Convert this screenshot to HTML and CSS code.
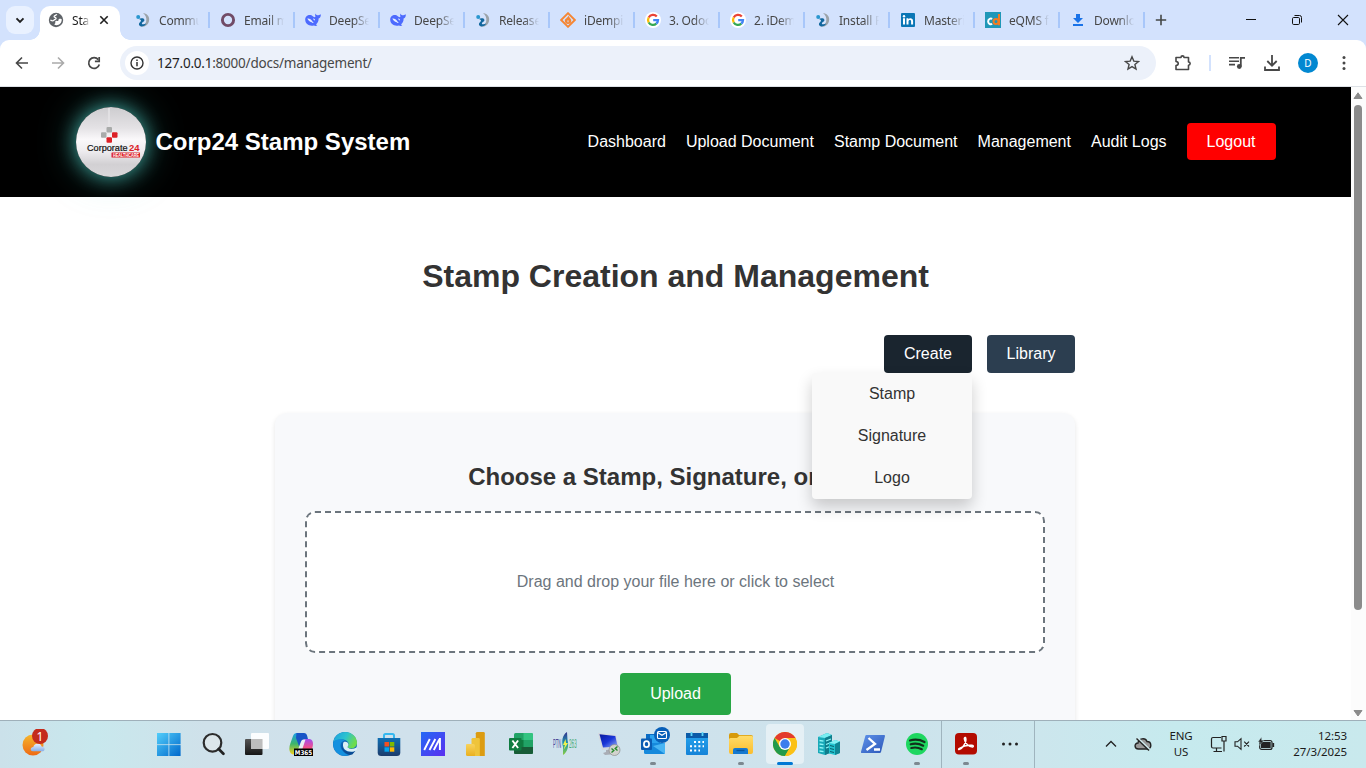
FILE: index.html
```html
<!DOCTYPE html>
<html lang="en">
<head>
<meta charset="utf-8">
<title>Stamp Creation and Management</title>
<link rel="stylesheet" href="styles.css">
</head>
<body>
<svg class="defs" width="0" height="0">
  <defs>
    <linearGradient id="gBlue" gradientUnits="userSpaceOnUse" x1="0" y1="0" x2="22" y2="24"><stop offset="0" stop-color="#54d0fb"/><stop offset="1" stop-color="#026bcd"/></linearGradient>
    <linearGradient id="gSun" x1="0" y1="0" x2="0" y2="1"><stop offset="0" stop-color="#f6b62c"/><stop offset="1" stop-color="#ee6a14"/></linearGradient>
    <linearGradient id="gCloud" x1="0" y1="0" x2="0" y2="1"><stop offset="0" stop-color="#eaf2ff"/><stop offset="1" stop-color="#86aee8"/></linearGradient>
    <linearGradient id="gDark" x1="0" y1="0" x2="0" y2="1"><stop offset="0" stop-color="#555"/><stop offset="1" stop-color="#161616"/></linearGradient>
    <linearGradient id="gCopL" x1="0" y1="0" x2="0" y2="1"><stop offset="0" stop-color="#1b9fe8"/><stop offset=".5" stop-color="#3db56b"/><stop offset="1" stop-color="#f4d11c"/></linearGradient>
    <linearGradient id="gCopR" x1="0" y1="0" x2="0" y2="1"><stop offset="0" stop-color="#a24df0"/><stop offset=".6" stop-color="#f0508c"/><stop offset="1" stop-color="#fb9a4a"/></linearGradient>
    <linearGradient id="gEdge" x1="0" y1="0" x2="1" y2=".4"><stop offset="0" stop-color="#1c9de0"/><stop offset=".55" stop-color="#2cc3cf"/><stop offset="1" stop-color="#6edc4c"/></linearGradient>
    <linearGradient id="gStore" x1="0" y1="0" x2="0" y2="1"><stop offset="0" stop-color="#0f6fb4"/><stop offset="1" stop-color="#1c3c6c"/></linearGradient>
    <linearGradient id="gAsus" x1="0" y1="0" x2="1" y2="1"><stop offset="0" stop-color="#2369f5"/><stop offset="1" stop-color="#5b2ff0"/></linearGradient>
    <linearGradient id="gBi" x1="0" y1="0" x2="0" y2="1"><stop offset="0" stop-color="#f8d35c"/><stop offset="1" stop-color="#eab01f"/></linearGradient>
    <linearGradient id="gPtn" x1="0" y1="0" x2="0" y2="1"><stop offset="0" stop-color="#33308c"/><stop offset=".5" stop-color="#1f9bb0"/><stop offset="1" stop-color="#8acb3a"/></linearGradient>
    <linearGradient id="gScreen" x1="0" y1="0" x2="1" y2="1"><stop offset="0" stop-color="#0a1a9c"/><stop offset=".5" stop-color="#1a35d8"/><stop offset="1" stop-color="#9db8f5"/></linearGradient>
    <linearGradient id="gCal" x1="0" y1="0" x2="0" y2="1"><stop offset="0" stop-color="#27a5ee"/><stop offset="1" stop-color="#1583d8"/></linearGradient>
    <linearGradient id="gFolder" x1="0" y1="0" x2="0" y2="1"><stop offset="0" stop-color="#ffdc6a"/><stop offset="1" stop-color="#fbbd2d"/></linearGradient>
    <linearGradient id="gPs" x1="0" y1="0" x2="1" y2="1"><stop offset="0" stop-color="#5f93ea"/><stop offset="1" stop-color="#2b56b8"/></linearGradient>
  </defs>
  <symbol id="swirl" viewBox="0 0 16 16">
    <path d="M8 1c5.800.6 7.600 6.200 5.200 10.200-1.700 2.900-5.200 4.100-7.700 3 2.600-.6 5-1.700 5.700-4.700C11.900 6.300 10.700 3 8 1z" fill="#9ba2a8"/>
    <path d="M3.800 6.900c2-.9 5.200-.9 5.600 1 .3 1.700-2.500 2.100-2.500 3.500 0 1.200 2.400 1.200 4.300.1-1.300 2.900-5.300 4.100-6.800 2-1.500-2.300 1.300-3.600 1.600-4.800.2-.9-.9-1.500-2.200-1.800z" fill="#13689f"/>
    <circle cx="3.200" cy="4.900" r="2" fill="#2a97cf"/>
  </symbol>
  <symbol id="whale" viewBox="0 0 16 16">
    <path d="M.2 7.800C.1 4.400 2.800 2.700 5.600 3.100c1.300.2 1.900 1 2.900 1.700.9.600 1.600.4 2-.3-.5-.9-.4-2 0-2.900.4 1 1 1.600 1.900 1.700 1 .1 2-.4 3.400-1.100.2 2.300-.6 3.700-2.200 4.200.1 2.800-1 4.600-2.600 6l1.300.9c-1 .8-2.300.7-3.400.2C4.500 14.600.3 12.200.2 7.800z" fill="#4d6bfe"/>
    <path d="M2.300 6.600c1.900-.5 3.900.9 5.200 3 .4.700.8 1 1.300 1.300-1 .3-1.800-.2-2.500-.9-1.100.1-2.800-.9-4-3.400z" fill="#e6eeff"/><path d="M8 6.500c1.200-.2 2.100.7 2.100 1.900-.8 0-1.700-.7-2.100-1.900z" fill="#e6eeff"/>
  </symbol>
  <symbol id="google" viewBox="0 0 16 16">
    <circle cx="8" cy="8" r="8" fill="#fff"/>
    <g fill="none" stroke-width="2.300">
      <path d="M11.800 4.500A5 5 0 0 0 3.700 5.500" stroke="#ea4335"/><path d="M3.700 5.500A5 5 0 0 0 3.700 10.500" stroke="#fbbc05"/>
      <path d="M3.700 10.500A5 5 0 0 0 11.300 11.700" stroke="#34a853"/><path d="M11.300 11.700A5 5 0 0 0 13 8.100H8.200" stroke="#4285f4"/>
    </g>
  </symbol>
</svg>

<div class="screen">
  <div class="tabstrip">
    <div class="tab-search"><svg width="12" height="12" viewBox="0 0 12 12"><path d="M2.500 4.300 6 7.800l3.500-3.500" fill="none" stroke="#1f1f1f" stroke-width="1.900"/></svg></div>
    <div class="tab tab-active">
      <svg class="fav" viewBox="0 0 16 16"><circle cx="8" cy="8" r="7.200" fill="#5f6368"/><path d="M8.800 2.300c-.6 1.200-2.600.9-2.700 2.200 0 1.100 2 .8 2 1.900 0 1-1.700.8-2 1.700-.4 1-2 .7-3.700.1" fill="none" stroke="#fff" stroke-width="1.300"/><path d="M13.700 7.200c-1.800-.7-3.300-.2-3.200.8.100.9-.9 1.100-1.700.9-1.100-.2-1.800.5-1.500 1.500.3 1-.8 1.200-.9 2.300 3.500 1.700 7.700-1.300 7.300-5.500z" fill="#fff"/></svg>
      <span class="tab-title tab-title-short">Sta</span>
      <svg class="tab-close" viewBox="0 0 10 10"><path d="M1.300 1.300l7.400 7.400M8.700 1.300 1.300 8.700" stroke="#1f1f1f" stroke-width="1.600"/></svg>
    </div>
    <div class="tab"><svg class="fav"><use href="#swirl"/></svg><span class="tab-title">Commu</span></div>
    <div class="tab"><svg class="fav" viewBox="0 0 16 16"><circle cx="8" cy="8" r="5.600" fill="none" stroke="#714b67" stroke-width="2.900"/></svg><span class="tab-title">Email m</span></div>
    <div class="tab"><svg class="fav"><use href="#whale"/></svg><span class="tab-title">DeepSe</span></div>
    <div class="tab"><svg class="fav"><use href="#whale"/></svg><span class="tab-title">DeepSe</span></div>
    <div class="tab"><svg class="fav"><use href="#swirl"/></svg><span class="tab-title">Release</span></div>
    <div class="tab"><svg class="fav" viewBox="0 0 16 16"><rect x="3.200" y="3.200" width="9.600" height="9.600" transform="rotate(45 8 8)" fill="none" stroke="#f58634" stroke-width="1.900"/><path d="M8.500 3.600c.2 1.900 2.800 3 2.800 5.100A3.300 3.300 0 0 1 8 11.900a3.300 3.300 0 0 1-3.200-3.200C4.800 6.500 8 6 8.500 3.600z" fill="#f58634"/><path d="M8 8.300v2" stroke="#d3e2fd"/></svg><span class="tab-title">iDempi</span></div>
    <div class="tab"><svg class="fav"><use href="#google"/></svg><span class="tab-title">3. Odoo</span></div>
    <div class="tab"><svg class="fav"><use href="#google"/></svg><span class="tab-title">2. iDem</span></div>
    <div class="tab"><svg class="fav"><use href="#swirl"/></svg><span class="tab-title">Install P</span></div>
    <div class="tab"><svg class="fav" viewBox="0 0 16 16"><rect x="1" y="1" width="14" height="14" rx="1" fill="#0a76b5"/><path d="M3 6.300h2v6.200H3zM6.500 6.300h1.900v.9c1-1.500 4.700-1.500 4.700 1.900v3.400h-2V9.400c0-2.100-2.600-1.900-2.600 0v3.100h-2z" fill="#fff"/><circle cx="4" cy="4.200" r="1.200" fill="#fff"/></svg><span class="tab-title">Masteri</span></div>
    <div class="tab"><svg class="fav" viewBox="0 0 16 16"><rect width="16" height="16" fill="#1f97b8"/><path d="M7.200 6.900A2.800 2.800 0 1 0 7.200 11.900" fill="none" stroke="#fff" stroke-width="2"/><circle cx="11" cy="9.500" r="2.500" fill="none" stroke="#f47b20" stroke-width="2"/><path d="M14 2v11.300" stroke="#f47b20" stroke-width="2"/></svg><span class="tab-title">eQMS f</span></div>
    <div class="tab"><svg class="fav" viewBox="0 0 16 16"><path d="M6 2h4v4h3L8 11 3 6h3zM3 12h10v2H3z" fill="#1a73e8"/></svg><span class="tab-title">Downlo</span></div>
    <svg class="new-tab" viewBox="0 0 12 12"><path d="M6 .8v10.400M.8 6h10.400" stroke="#444746" stroke-width="1.600"/></svg>
    <div class="win-controls">
      <svg viewBox="0 0 12 12"><path d="M1 5.500h10" stroke="#111"/></svg>
      <svg viewBox="0 0 12 12"><rect x="1.500" y="3.500" width="7" height="7" rx="1.200" fill="none" stroke="#111"/><path d="M3.500 1.500h5a2 2 0 0 1 2 2v5" fill="none" stroke="#111"/></svg>
      <svg viewBox="0 0 12 12"><path d="M1 1l10 10M11 1 1 11" stroke="#111" stroke-width="1.100"/></svg>
    </div>
  </div>

  <div class="toolbar-back"><div class="toolbar">
    <div class="nav-icons">
      <svg viewBox="0 0 16 16"><path d="M14 8H3M8 2.500 2.500 8 8 13.500" fill="none" stroke="#474747" stroke-width="1.600"/></svg>
      <svg viewBox="0 0 16 16"><path d="M2 8h11M8 2.500 13.500 8 8 13.500" fill="none" stroke="#aaa" stroke-width="1.600"/></svg>
      <svg viewBox="0 0 16 16"><path d="M13.300 9.500A5.400 5.400 0 1 1 12.300 4.600" fill="none" stroke="#474747" stroke-width="1.700"/><path d="M13.200 2v4.300H8.900" fill="none" stroke="#474747" stroke-width="1.700"/></svg>
    </div>
    <div class="omnibox">
      <div class="site-info"><svg width="14" height="14" viewBox="0 0 14 14"><circle cx="7" cy="7" r="6" fill="none" stroke="#333" stroke-width="1.400"/><path d="M7 6v4.200M7 3.600v1.500" stroke="#333" stroke-width="1.500"/></svg></div>
      <span class="url"><b>127.0.0.1</b>:8000/docs/management/</span>
      <svg class="star" viewBox="0 0 16 16"><path d="M8 1.800l1.800 4.300 4.700.4-3.600 3 1.100 4.600L8 11.600l-4 2.500 1.100-4.600-3.600-3 4.700-.4z" fill="none" stroke="#474747" stroke-width="1.400"/></svg>
    </div>
    <div class="actions">
      <svg class="act" viewBox="0 0 18 18"><path d="M2 3.500h5c0-2.200 3-2.200 3 0h4.500V8c2.200 0 2.200 3.200 0 3.200V15.500H2v-4c3-.3 3-3.700 0-4z" fill="none" stroke="#474747" stroke-width="1.600" stroke-linejoin="round"/></svg>
      <span class="act-sep"></span>
      <svg class="act" viewBox="0 0 18 18"><path d="M1 3.800h10M1 7.200h10M1 10.600h6" stroke="#474747" stroke-width="1.600"/><path d="M12.800 12.500V3.800H17" fill="none" stroke="#474747" stroke-width="1.800"/><circle cx="11.300" cy="12.500" r="2.400" fill="#474747"/></svg>
      <svg class="act" viewBox="0 0 18 18"><path d="M9 1v10.500M4.300 7 9 11.700 13.700 7M2 12.500V16h14v-3.500" fill="none" stroke="#474747" stroke-width="1.800"/></svg>
      <span class="avatar">D</span>
      <svg class="act" viewBox="0 0 18 18"><g fill="#474747"><circle cx="9" cy="3.500" r="1.500"/><circle cx="9" cy="9" r="1.500"/><circle cx="9" cy="14.500" r="1.500"/></g></svg>
    </div>
  </div></div>

  <div class="viewport">
    <div class="page">
      <header class="site-header"><div class="header-inner">
        <div class="logo">
          <svg width="70" height="70" viewBox="0 0 70 70">
            <path d="M33 1v19" stroke="#e6e5e7" stroke-width="1.500"/>
            <g><rect x="30.500" y="20" width="5.500" height="5.500" rx="1" fill="#a9abaa"/><rect x="25" y="25.200" width="5.500" height="5.500" rx="1" fill="#a9abaa"/><rect x="36" y="25.200" width="5.500" height="5.500" rx="1" fill="#dc2027"/><rect x="30.500" y="30.200" width="5.500" height="5.500" rx="1" fill="#dc2027"/></g>
            <text x="11" y="44" class="logo-word" textLength="40.500" lengthAdjust="spacingAndGlyphs">Corporate</text><text x="53" y="44" class="logo-num" textLength="10.500" lengthAdjust="spacingAndGlyphs">24</text>
            <rect x="35.500" y="45.500" width="28.500" height="5" rx=".5" fill="#dc2027"/><text x="37" y="50" class="logo-sub" textLength="26" lengthAdjust="spacingAndGlyphs">HEALTHCARE</text>
          </svg>
        </div>
        <div class="brand">Corp24 Stamp System</div>
        <nav class="nav"><a>Dashboard</a><a>Upload Document</a><a>Stamp Document</a><a>Management</a><a>Audit Logs</a><a class="logout">Logout</a></nav>
      </div></header>
      <main class="main">
        <h1>Stamp Creation and Management</h1>
        <div class="buttons">
          <div class="dropdown"><div class="btn btn-open">Create</div>
            <div class="menu"><a>Stamp</a><a>Signature</a><a>Logo</a></div>
          </div>
          <div class="btn">Library</div>
        </div>
        <section class="card">
          <h2>Choose a Stamp, Signature, or Logo</h2>
          <div class="dropzone">Drag and drop your file here or click to select</div>
          <div class="upload">Upload</div>
        </section>
      </main>
    </div>
    <div class="scrollbar">
      <svg width="10" height="8" viewBox="0 0 10 8"><path d="M5 .8 9 6.500H1z" fill="#8b8b8b" stroke="#8b8b8b" stroke-linejoin="round"/></svg>
      <div class="thumb"></div>
      <svg class="arrow-down" width="10" height="8" viewBox="0 0 10 8"><path d="M5 7 9 1.500H1z" fill="#8b8b8b" stroke="#8b8b8b" stroke-linejoin="round"/></svg>
    </div>
  </div>

  <footer class="taskbar">
    <div class="weather"><svg width="28" height="28" viewBox="0 0 28 28"><circle cx="11" cy="16" r="10.500" fill="url(#gSun)"/><path d="M11 22.300c-3 0-3-4.300.3-4.300.8-4.600 7.600-4.800 8.300-.6 4-.2 4 4.900.4 4.900z" fill="url(#gCloud)"/><circle cx="18" cy="7" r="8" fill="#c42b1c"/><text x="18" y="11.500" class="badge-num">1</text></svg></div>
    <div class="apps">
      <div class="app"><svg viewBox="0 0 24 24"><g fill="url(#gBlue)"><rect x="0" y="1" width="11.500" height="11.300"/><rect x="12.300" y="1" width="11.300" height="11.300"/><rect x="0" y="13.100" width="11.500" height="11"/><rect x="12.300" y="13.100" width="11.300" height="11"/></g></svg></div>
      <div class="app"><svg viewBox="0 0 24 24"><circle cx="11.500" cy="10.800" r="8.800" fill="#dce6ea" stroke="#2c2c2c" stroke-width="2.200"/><path d="M17.700 17l4.700 4.800" stroke="#222" stroke-width="2.700" stroke-linecap="round"/></svg></div>
      <div class="app"><svg viewBox="0 0 24 24"><rect x="0" y="7" width="17.500" height="16" rx="1" fill="url(#gDark)"/><rect x="6" y="1" width="18" height="16" rx="1" fill="#fff" opacity=".92"/><rect x="6" y="7" width="11.500" height="10" fill="#bdbdbd"/></svg></div>
      <div class="app"><svg viewBox="0 0 24 24"><path d="M8 1h7L9.500 19q-.8 3-4 3.500Q.5 22.500.3 17q0-3 1.200-6L4 4Q5 1 8 1z" fill="url(#gCopL)"/><path d="M7.500 1H15q2.500 0 3.200 3l1 4H15q-2 0-3 3l-1.700 4L7 6z" fill="#1955c6"/><path d="M13.500 8.500Q14.500 7 16.500 7h4Q24 7.500 24 12q0 2-1 5l-1.200 4H9.500z" fill="url(#gCopR)"/><path d="M8.500 19 12 9.500Q12.700 7.500 14.500 7.500h2L12.700 19z" fill="#e9f0f4"/><rect x="5" y="16.500" width="19" height="8" fill="#000"/><text x="5.800" y="23.200" class="m365" textLength="17.400" lengthAdjust="spacingAndGlyphs">M365</text></svg></div>
      <div class="app"><svg viewBox="0 0 24 24"><circle cx="12" cy="12" r="12" fill="#0c67b7"/><path d="M.3 10C1.500 3.500 6.500 0 12 0c7 0 12 5 12 10.800 0 5-5.500 7-9 5-1.300-.8.600-1.300.6-3.800C15.600 8 8 5.500.3 10z" fill="url(#gEdge)"/><path d="M.2 10.500C3 6.500 8 6.500 12 8.700 7 9 6.500 14.500 9 18c2 3 4.500 4.500 7.500 5.100C8 26-.8 20 .2 10.500z" fill="#1490df"/><path d="M9.700 11.300c-2.200 5 2.500 10.200 11.600 7.700l1 0-3 3.500-2.800.6C10 21 7 15 9.700 11.300z" fill="#0a4b94"/><path d="M10.500 10.300c2.500-1.500 5.300.5 4.900 2.700-.4 1.500-1.300 2.200-.4 2.800 2.500 1.800 5.700 1.500 8.700-.5l.4 2.500-3 1.600C12 21 8.500 15 10.500 10.300z" fill="#dbeff6"/></svg></div>
      <div class="app"><svg viewBox="0 0 24 24"><path d="M7 7V3.500Q7 2 8.500 2h7Q17 2 17 3.500V7" fill="none" stroke="#36b8ef" stroke-width="2"/><path d="M.7 6h22.600v14.500q0 3.500-3.500 3.500H4.200Q.7 24 .7 20.500z" fill="url(#gStore)"/><path d="M7.500 10H12v4.500H7.500z" fill="#f25022"/><path d="M12.800 10h4.500v4.500h-4.500z" fill="#7fba00"/><path d="M7.500 15.300H12v4.400H7.500z" fill="#00a4ef"/><path d="M12.800 15.300h4.500v4.400h-4.500z" fill="#ffb900"/></svg></div>
      <div class="app"><svg viewBox="0 0 24 24"><rect width="24" height="24" fill="url(#gAsus)"/><path d="M3.200 18 8.800 7M8.500 18 14.300 7M12.800 18 18.300 7.500" fill="none" stroke="#fff" stroke-width="1.900"/><path d="M18.900 6v12" stroke="#fff" stroke-width="2"/></svg></div>
      <div class="app"><svg viewBox="0 0 24 24"><path d="M12.500 0h6q1.300 0 1.300 1.300V24h-9V1.300Q10.800 0 12.500 0z" fill="#dc9c12"/><path d="M8 6h5.500q1.300 0 1.300 1.300V24H6.500V7.300Q6.500 6 8 6z" fill="#efc43a"/><path d="M2 12h6q2 0 2 2v10H2.500Q1 24 1 22.500V13q0-1 1-1z" fill="url(#gBi)"/></svg></div>
      <div class="app"><svg viewBox="0 0 24 24"><rect x="5" y="1" width="19" height="21" rx="1.500" fill="#21a366"/><path d="M5 8h19v7H5z" fill="#107c41"/><path d="M5 15h19v5.500q0 1.500-1.500 1.500h-16Q5 22 5 20.500z" fill="#185c37"/><path d="M14.500 1h8Q24 1 24 2.500V8h-9.500z" fill="#33c481"/><path d="M14.500 8H24v7h-9.500z" fill="#21a366"/><rect x="0" y="6" width="12.500" height="12.500" rx="1" fill="#107c41"/><path d="M3.400 8.500l5.700 7.500M9.100 8.500 3.400 16" stroke="#fff" stroke-width="1.900"/></svg></div>
      <div class="app"><svg viewBox="0 0 24 24"><text x="0" y="16.500" class="ptn" transform="scale(.34 1)">PTN</text><text x="41" y="16.500" class="ptn ptn-green" transform="scale(.39 1)">263</text><path d="M14 0C9 3 8.500 10 10 15v8c5-3 6-10 4.500-15z" fill="url(#gPtn)"/><path d="M12.500 7 10 13h2l-1.500 5L15 11h-2z" fill="#f4f24a"/></svg></div>
      <div class="app"><svg viewBox="0 0 24 24"><path d="M1 1l18 2 3 13-17 2z" fill="#d4d7dd"/><path d="M2.500 2.200l15.800 1.900 2.400 10.500L6 15.500z" fill="url(#gScreen)"/><path d="M9 18l7-1 1 3 2 2-11 1-2-2 3-1z" fill="#a9adb5"/><circle cx="17.500" cy="18" r="5.500" fill="#d2d3ce" stroke="#8c8e8c" stroke-width=".7"/><path d="M14.500 16.500l2.300 2-2.300 2M20.500 14.500l-2.300 2 2.300 2" fill="none" stroke="#258a2c" stroke-width="1.400"/></svg></div>
      <div class="app running"><svg viewBox="0 0 24 24"><path d="M5 2h13v10H5z" fill="#0b6cc4"/><path d="M9 3h10v9H9z" fill="#2ba3ef"/><path d="M3 11h21v9.500q0 1.500-1.500 1.500h-18Q3 22 3 20.500z" fill="#1689dc"/><path d="M24 11v11L12 14z" fill="#49b5f4"/><rect x="0" y="6.500" width="11" height="11.500" rx="1" fill="#0b5cb3"/><ellipse cx="5.500" cy="12.200" rx="2.600" ry="3" fill="none" stroke="#fff" stroke-width="1.700"/></svg><span class="mail-badge"><svg width="16" height="16" viewBox="0 0 16 16"><circle cx="8" cy="8" r="8" fill="#075fb8"/><rect x="3.500" y="4.500" width="9" height="7" rx="1" fill="none" stroke="#fff" stroke-width="1.100"/><path d="M3.700 5.500 8 8.300l4.300-2.800" fill="none" stroke="#fff" stroke-width="1.100"/></svg></span></div>
      <div class="app"><svg viewBox="0 0 24 24"><rect x="1" y="1" width="22" height="22" rx="1" fill="url(#gCal)"/><path d="M1 1h22v5H1z" fill="#0a5ba8"/><path d="M6.500 0v4M17.500 0v4" stroke="#5fd4f8" stroke-width="1.800"/><path d="M9 10h10M5 14.300h14M5 18.600h10" stroke="#fff" stroke-width="2" stroke-dasharray="2 2.200"/></svg></div>
      <div class="app running"><svg viewBox="0 0 24 24"><path d="M0 3q0-2 2-2h6l2 2h12q2 0 2 2v6H0z" fill="#d79a0b"/><path d="M0 7.500Q0 6 1.500 6H8l2.500-2.300H22.500Q24 3.700 24 5.200V20q0 2-2 2H2q-2 0-2-2z" fill="url(#gFolder)"/><path d="M4 22v-4q0-2 2-2h11q2 0 2 2v4z" fill="#1679cf"/><path d="M7.500 18.500h8" stroke="#0a559c" stroke-width="1.300"/></svg></div>
      <div class="app running active"><svg viewBox="0 0 24 24"><circle cx="12" cy="12" r="12" fill="#fbc116"/><path d="M12 12 1.600 6A12 12 0 0 1 22.400 6z" fill="#e33b2e"/><path d="M1.600 6A12 12 0 0 0 12 24l5.200-9L12 12 6.800 15z" fill="#229a4b"/><path d="M12 6h10.400A12 12 0 0 1 12 24l5.200-9z" fill="#fbc116"/><circle cx="12" cy="12" r="6" fill="#fff"/><circle cx="12" cy="12" r="4.700" fill="#3b7ded"/></svg></div>
      <div class="app"><svg viewBox="0 0 24 24"><path d="M1 5l9-4 5 2v17l-7 3-7-2z" fill="#19a9b8"/><path d="M1 5l9-4 5 2-7 3z" fill="#78edf1"/><path d="M8 6l7-3v17l-7 3z" fill="#0f7e8d"/><path d="M2.500 8.500l4 .7M2.500 12l4 .7M2.500 15.500l4 .7M2.500 19l4 .7M9 9l5-2M9 12.500l5-2M9 16l5-2" stroke="#8ff6f7" stroke-width="1.300"/><path d="M12 11l6-3 5 1.500V21l-5 2-6-1.500z" fill="#22c3cf"/><path d="M12 11l6-3 5 1.500-5 2.500z" fill="#83f1f4"/><path d="M18 12l5-2.500V21l-5 2z" fill="#108694"/><path d="M13 13.500l4 1M13 16.500l4 1M13 19.500l4 1" stroke="#08626f" stroke-width="1.200"/></svg></div>
      <div class="app"><svg viewBox="0 0 24 24"><path d="M5.500 3h17.700q1 0 .8 1l-4 16q-.3 1-1.300 1H1q-1.200 0-1-1.200L4.300 4q.2-1 1.200-1z" fill="url(#gPs)"/><path d="M7.500 6l6.500 6-8.500 6M13 17.500h6" fill="none" stroke="#fff" stroke-width="2.300"/></svg></div>
      <div class="app running"><svg viewBox="0 0 24 24"><circle cx="12" cy="12" r="11" fill="#1ed760"/><path d="M5 8.500q7.500-2.200 14.500 1.500M5.700 12.300q6.500-1.800 12.500 1.400M6.300 16q5.500-1.400 10.500 1.200" fill="none" stroke="#12301c" stroke-width="2.200" stroke-linecap="round"/></svg></div>
    </div>
    <div class="apps apps-extra">
      <div class="app running"><svg viewBox="0 0 24 24"><rect x="1" y="1" width="22" height="21.500" rx="4" fill="#b30b00"/><path d="M5 17.500c3-.2 8-7.500 6.700-11.500-.4-1-1.700-.5-1.300 1.200.7 4.300 4.600 7.800 8.200 7.700 1-.1.900-1.500-.3-1.600-4.600-.6-9.300.7-12.800 3-.9.600-1.200 1.200-.5 1.200z" fill="none" stroke="#fff" stroke-width="1.500"/></svg></div>
      <div class="app"><svg viewBox="0 0 24 24"><g fill="#222"><circle cx="5.500" cy="12" r="1.500"/><circle cx="12" cy="12" r="1.500"/><circle cx="18.500" cy="12" r="1.500"/></g></svg></div>
    </div>
    <div class="tray">
      <svg width="12" height="8" viewBox="0 0 12 8"><path d="M1 6.500l5-5 5 5" fill="none" stroke="#222" stroke-width="1.300"/></svg>
      <svg class="t-cloud" width="18" height="14" viewBox="0 0 18 14"><path d="M4.500 12C0 12 0 6 4 6c.5-5 7.500-5.500 9-1.500C18 4.500 18 12 13.500 12z" fill="#999" stroke="#222" stroke-width="1.400"/><path d="M3 .5l12.500 12" stroke="#d0ebef" stroke-width="2"/><path d="M2.500 1.500 15 13.500" stroke="#222" stroke-width="1.400"/></svg>
      <div class="lang"><span>ENG</span><span>US</span></div>
      <svg class="t-net" width="18" height="18" viewBox="0 0 18 18"><path d="M11 2.500H3Q1.500 2.500 1.500 4v7.500Q1.500 13 3 13h8.500M6.500 13v3.500M3.500 16.500h8.500M12 1.500h4v4.500h-4zM14 6v10.500" fill="none" stroke="#222" stroke-width="1.200"/></svg>
      <svg class="t-vol" width="16" height="14" viewBox="0 0 16 14"><path d="M1 4.800h2.500L7 1.700v10.600L3.500 9.200H1zM10.200 4.700l4.800 4.800M15 4.700l-4.800 4.800" fill="none" stroke="#222" stroke-width="1.100"/></svg>
      <svg class="t-bat" width="17" height="14" viewBox="0 0 17 14"><rect x="1.700" y="3.500" width="12.300" height="9" rx="2" fill="none" stroke="#222" stroke-width="1.200"/><path d="M3 4.800h9.700v6.400H3z" fill="#222"/><path d="M15.300 6v4" stroke="#222" stroke-width="1.700"/><path d="M3.500 0 0 5h2.200L1.300 8.500 5.800 3.500H3.700z" fill="#222" stroke="#c8ebef" stroke-width=".4"/></svg>
      <div class="clock"><span>12:53</span><span>27/3/2025</span></div>
    </div>
  </footer>
</div>
</body>
</html>
```
FILE: styles.css
```css
* { box-sizing: border-box; }
body { margin: 0; overflow: hidden; font-family: "Liberation Sans", Arial, sans-serif; }
svg { flex: none; display: block; }
.defs { position: absolute; }
.screen { width: 1366px; height: 768px; display: flex; flex-direction: column; overflow: hidden; background: #fff; }

/* tab strip */
.tabstrip { height: 40px; flex: none; display: flex; align-items: center; padding-left: 6px; background: #d3e2fd; font: 12px "Noto Sans", sans-serif; color: #474747; }
.tab-search { width: 28px; height: 28px; border-radius: 9px; background: #e9f1ff; display: flex; align-items: center; justify-content: center; margin-right: 6px; }
.tab { width: 85px; height: 40px; display: flex; align-items: center; padding-left: 10px; position: relative; }
.tab::after { content: ""; position: absolute; right: 0; top: 12px; width: 2px; height: 16px; background: #a8c7fa; }
.fav { width: 16px; height: 16px; margin-right: 8px; }
.tab-title { width: 41px; overflow: hidden; white-space: nowrap; letter-spacing: -.2px; line-height: 20px; padding-top: 1px; -webkit-mask-image: linear-gradient(90deg, #000 60%, transparent 98%); mask-image: linear-gradient(90deg, #000 60%, transparent 98%); }
.tab-active { width: 80px; height: 34px; align-self: flex-end; margin-right: 5px; padding: 0 0 6px 8px; background: #fff; border-radius: 10px 10px 0 0; color: #1f1f1f; }
.tab-active::before, .tab-active::after { content: ""; position: absolute; top: auto; bottom: 0; width: 10px; height: 10px; }
.tab-active::before { left: -10px; background: radial-gradient(circle at 0 0, transparent 9.500px, #fff 10px); }
.tab-active::after { right: -10px; background: radial-gradient(circle at 100% 0, transparent 9.500px, #fff 10px); }
.tab-title-short { width: 18px; }
.tab-close { width: 10px; height: 10px; margin-left: 9px; }
.new-tab { width: 12px; height: 12px; margin-left: 10px; }
.win-controls { margin-left: auto; display: flex; gap: 34px; padding-right: 17px; }
.win-controls svg { width: 12px; height: 12px; }

/* toolbar */
.toolbar-back { flex: none; background: #d3e2fd; }
.toolbar { height: 47px; display: flex; align-items: center; background: #fff; border-radius: 9px 9px 0 0; border-bottom: 1px solid #dde1e6; }
.nav-icons { width: 120px; display: flex; gap: 20px; padding-left: 14px; }
.nav-icons svg { width: 16px; height: 16px; }
.omnibox { width: 1036px; height: 34px; border-radius: 17px; background: #ecf1fa; display: flex; align-items: center; padding: 0 16px 0 5px; }
.site-info { width: 24px; height: 24px; border-radius: 50%; background: #fff; display: flex; align-items: center; justify-content: center; margin-right: 8px; }
.url { font: 13.500px "Noto Sans", sans-serif; letter-spacing: -.22px; padding-bottom: 1px; color: #474747; }
.url b { font-weight: 400; color: #1f1f1f; }
.star { width: 16px; height: 16px; margin-left: auto; }
.actions { flex: 1; display: flex; align-items: center; justify-content: space-between; padding: 0 13px 0 18px; }
.act { width: 18px; height: 18px; }
.act-sep { width: 2px; height: 16px; background: #d3e2fd; }
.avatar { width: 20px; height: 20px; border-radius: 50%; background: #0288d1; color: #fff; font: 10px/20px "Noto Sans", sans-serif; text-align: center; }

/* page */
.viewport { height: 633px; flex: none; display: flex; overflow: hidden; }
.page { width: 1351px; height: 633px; overflow: hidden; }
.site-header { height: 110px; background: #000; }
.header-inner { width: 1200px; height: 110px; margin: 0 auto; display: flex; align-items: center; }
.logo { width: 70px; height: 70px; border-radius: 50%; margin-right: 10px; background: linear-gradient(#cdcccf, #e4e2e5 30%, #faf8fa 46%, #eeecef 63%, #d2d0d3 82%, #d9d8da); box-shadow: 0 0 20px rgba(78, 205, 196, .75), 0 0 40px rgba(78, 205, 196, .35); }
.logo-word { font: 8.500px "Liberation Sans", sans-serif; fill: #111; stroke: #111; stroke-width: .2px; }
.logo-num { font: bold 9px "Liberation Sans", sans-serif; fill: #dc2027; }
.logo-sub { font: bold 4.800px "Liberation Sans", sans-serif; fill: #fff; }
.brand { font-size: 24px; font-weight: 700; color: #fff; }
.nav { margin-left: auto; padding-bottom: 1px; display: flex; align-items: center; gap: 20px; font-size: 16px; color: #fff; }
.logout { height: 37px; padding: 0 20px; border-radius: 4px; background: #f00; line-height: 37px; }
.main { width: 800px; margin-left: 275px; padding-top: 61px; }
h1 { margin: 0 0 40px; padding-left: 1px; font-size: 32px; line-height: 37px; text-align: center; color: #333; }
.buttons { display: flex; justify-content: flex-end; gap: 15px; margin-bottom: 40px; }
.dropdown { position: relative; }
.btn { width: 88px; height: 38px; border-radius: 4px; background: #2c3e50; color: #fff; font-size: 16px; line-height: 37px; text-align: center; }
.btn-open { background: #1a252f; }
.menu { position: absolute; right: 0; top: 38px; width: 160px; border-radius: 4px; background: #f9f9f9; box-shadow: 0 8px 16px rgba(0, 0, 0, .2); z-index: 1; }
.menu a { display: block; height: 42px; line-height: 41px; font-size: 16px; text-align: center; color: #333; }
.card { height: 340px; padding: 50px 30px 0; border-radius: 12px; background: #f8f9fb; box-shadow: 0 2px 5px rgba(0, 0, 0, .1); display: flex; flex-direction: column; align-items: center; }
h2 { margin: 0 0 20px; padding-left: 1px; font-size: 24px; line-height: 28px; color: #333; }
.dropzone { width: 740px; height: 142px; padding-left: 1px; border: 2px dashed #6c757d; border-radius: 10px; background: #fff; color: #6c757d; font-size: 16px; display: flex; align-items: center; justify-content: center; }
.upload { width: 111px; height: 42px; margin: 20px 0 0 1px; border-radius: 4px; background: #28a745; color: #fff; font-size: 16px; line-height: 41px; text-align: center; }

.scrollbar { width: 15px; height: 633px; background: #fcfcfc; display: flex; flex-direction: column; align-items: center; padding: 5px 1px 3px 0; }
.thumb { width: 8px; height: 505px; margin-top: 5px; border-radius: 4px; background: #8b8b8b; }
.arrow-down { margin-top: auto; }

/* taskbar */
.taskbar { height: 48px; flex: none; display: flex; align-items: center; border-top: 1px solid #9fb0ba; background: linear-gradient(90deg, #cbe1ea 0, #c8e8ed 7%, #cfe1ea 15%, #d0e1ec 30%, #cde3ec 65%, #cce6ed 76%, #c6eaee 86%, #c9e9ed 100%); }
.weather { width: 147px; padding: 0 0 3px 22px; }
.badge-num { font: 12px "Noto Sans", sans-serif; fill: #fff; text-anchor: middle; }
.apps { height: 47px; display: flex; align-items: center; border-right: 1px solid #9fb4be; padding-right: 2px; }
.app { width: 44px; height: 40px; margin-bottom: 1px; display: flex; align-items: center; justify-content: center; position: relative; border-radius: 4px; }
.app > svg { width: 24px; height: 24px; }
.apps-extra { width: 93px; padding: 0 2px; }
.running::after { content: ""; position: absolute; bottom: -1px; left: 19px; width: 6px; height: 3px; border-radius: 2px; background: #7c8890; }
.active { width: 38px; margin: 0 3px 1px; background: #e5f0f5; }
.active::after { left: 11px; width: 16px; background: #0078d4; }
.mail-badge { position: absolute; left: 23px; top: 3px; }
.m365 { font: bold 6.500px "DejaVu Sans", sans-serif; fill: #fff; }
.ptn { font: 12px "Liberation Sans", sans-serif; fill: #4b4b9a; }
.ptn-green { fill: #4dac79; }
.tray { flex: 1; display: flex; align-items: center; padding: 0 19px 1px 70px; font: 11.500px/16px "Noto Sans", sans-serif; color: #1b1b1b; letter-spacing: -.1px; }
.t-cloud { margin-left: 17px; }
.lang { width: 32px; margin-left: 13px; display: flex; flex-direction: column; align-items: center; }
.t-net { margin-left: 13px; }
.t-vol { margin-left: 6px; }
.t-bat { margin-left: 8px; }
.clock { margin-left: auto; display: flex; flex-direction: column; align-items: flex-end; }
```
